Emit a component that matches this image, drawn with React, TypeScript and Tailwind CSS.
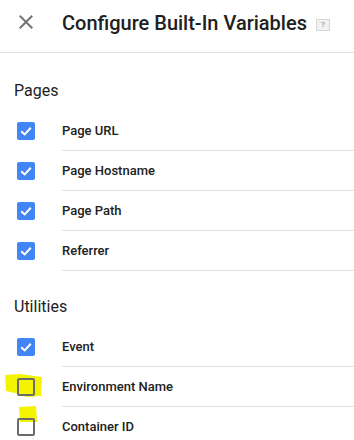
import React from 'react';

type Item = { label: string; checked: boolean; mark?: 'env' | 'container' };

const sections: { title: string; items: Item[] }[] = [
  {
    title: 'Pages',
    items: [
      { label: 'Page URL', checked: true },
      { label: 'Page Hostname', checked: true },
      { label: 'Page Path', checked: true },
      { label: 'Referrer', checked: true },
    ],
  },
  {
    title: 'Utilities',
    items: [
      { label: 'Event', checked: true },
      { label: 'Environment Name', checked: false, mark: 'env' },
      { label: 'Container ID', checked: false, mark: 'container' },
    ],
  },
];

// yellow highlighter strokes drawn over the screenshot
const Highlight = ({ kind }: { kind: 'env' | 'container' }) =>
  kind === 'env' ? (
    <svg className="absolute left-[-13px] top-[-4px]" width="40" height="24" viewBox="0 0 40 24">
      <path d="M1 1 L16 0 L38 3 L37 22 L22 23 L15 20 L2 17 Z" fill="#f4f400" />
    </svg>
  ) : (
    <svg className="absolute left-[1px] top-[-12px]" width="20" height="18" viewBox="0 0 20 18">
      <path d="M1 1 L18 0 L19 16 L2 16 Z" fill="#f4f400" />
    </svg>
  );

const Checkbox = ({ checked, mark }: { checked: boolean; mark?: 'env' | 'container' }) => (
  <div className="relative w-[18px] h-[18px] shrink-0">
    {mark && <Highlight kind={mark} />}
    {checked ? (
      <div className="relative w-[18px] h-[18px] rounded-[2px] bg-[#4285f4] flex items-center justify-center">
        <svg width="14" height="14" viewBox="0 0 14 14">
          <polyline points="2.2,7.2 5.6,10.4 11.8,3.8" fill="none" stroke="#fff" strokeWidth="2" />
        </svg>
      </div>
    ) : (
      <div className="relative w-[18px] h-[18px] rounded-[2px] border-2 border-[#6b6b6b]" />
    )}
  </div>
);

const App = () => {
  return (
    <div className="w-[354px] h-[440px] overflow-hidden bg-white text-[#212121]" style={{ fontFamily: 'Roboto, sans-serif' }}>
      <div className="h-[53px] border-b border-[#e0e0e0] flex items-start pt-[10px] pl-[14px]">
        <svg width="24" height="24" viewBox="0 0 24 24" className="shrink-0">
          <path
            fill="#757575"
            d="M19 6.41L17.59 5 12 10.59 6.41 5 5 6.41 10.59 12 5 17.59 6.41 19 12 13.41 17.59 19 19 17.59 13.41 12z"
          />
        </svg>
        <h1 className="ml-6 text-[20px] leading-[26px] font-medium whitespace-nowrap">Configure Built-In Variables</h1>
        <div className="ml-[9px] mt-[9px] w-[14px] h-3 bg-[#f1f1f1] border border-[#d6d6d6] flex items-center justify-center text-[8px] leading-none text-[#888]">
          ?
        </div>
      </div>

      {sections.map((s, si) => (
        <div key={s.title} className={si === 0 ? 'mt-[26px]' : 'mt-6'}>
          <h2 className="pl-[14px] text-[16px] leading-6 font-normal mb-2">{s.title}</h2>
          {s.items.map((it) => (
            <div key={it.label} className="h-10 flex items-center pl-[17px]">
              <Checkbox checked={it.checked} mark={it.mark} />
              <div className="ml-[27px] flex-1 h-full flex items-center border-b border-[#e0e0e0] text-[13px] font-medium">
                {it.label}
              </div>
            </div>
          ))}
        </div>
      ))}
    </div>
  );
};

export default App;
